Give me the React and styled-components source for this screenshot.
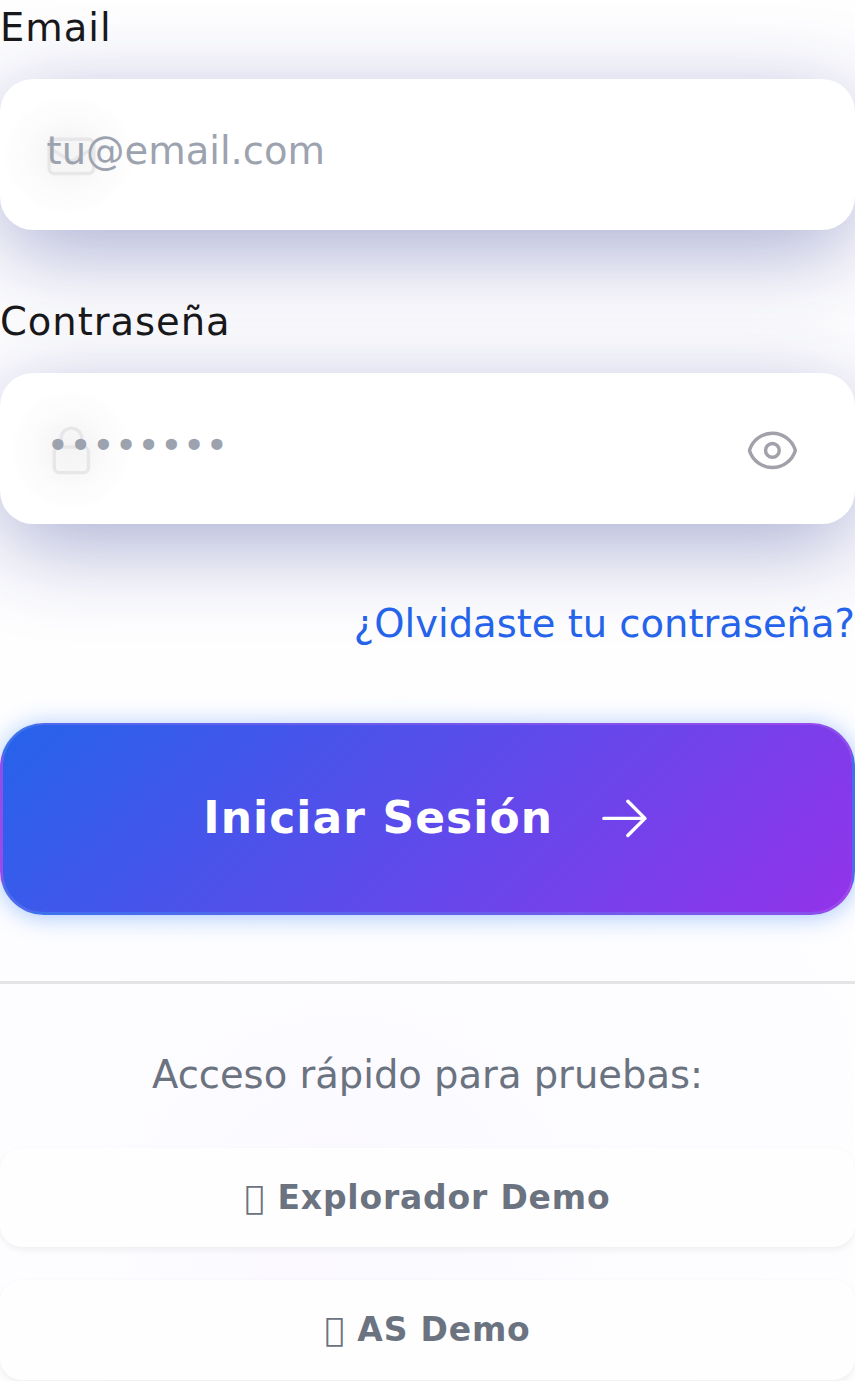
import React from "react";
import styled, { createGlobalStyle } from "styled-components";
import {
  HiOutlineArrowRight,
  HiOutlineEnvelope,
  HiOutlineEye,
  HiOutlineLockClosed,
} from "react-icons/hi2";

const GlobalStyle = createGlobalStyle`
  *, *::before, *::after { box-sizing: border-box; }
  html, body { margin: 0; padding: 0; }
  body { background: #fefeff; overflow: hidden; }
  button, input { font-family: inherit; }
`;

const Page = styled.main`
  width: 100%;
  height: 1381px;
  overflow: hidden;
  padding-top: 1.7px;
  font-family: "DejaVu Sans", sans-serif;
  font-size: 38.48px;
  line-height: 52px;
  color: #18181b;
  background:
    radial-gradient(circle at 340px 1230px, rgba(192, 85, 247, 0.014), rgba(192, 85, 247, 0.01) 180px, transparent 300px),
    radial-gradient(circle at 400px 1250px, rgba(59, 100, 246, 0.01), transparent 660px),
    #fefeff;
`;

const Form = styled.form`
  display: flex;
  flex-direction: column;
`;

const Field = styled.div`
  display: flex;
  flex-direction: column;
  gap: 25.4px;
  margin-bottom: ${(p) => p.$gap}px;
`;

const Label = styled.label`
  position: relative;
  z-index: 1;
  letter-spacing: 0.025em;
`;

const InputShell = styled.div`
  position: relative;
  height: 151.2px;
  border-radius: 33px;
  background: #fff;
  box-shadow: 0 22px 87.7px rgba(31, 38, 135, 0.37);
`;

const LeadingIcon = styled.span`
  position: absolute;
  top: 49.6px;
  left: 43.8px;
  display: flex;
  color: #e7e7e9;
  font-size: 54.8px;

  &::before {
    content: "";
    position: absolute;
    inset: ${(p) => p.$glow};
    border-radius: 50%;
    background: radial-gradient(
      closest-side,
      rgba(0, 0, 0, 0.044),
      rgba(0, 0, 0, 0.034) 30%,
      rgba(0, 0, 0, 0.016) 60%,
      rgba(0, 0, 0, 0.006) 88%,
      transparent
    );
  }

  svg { position: relative; }
`;

const Input = styled.input`
  position: relative;
  display: block;
  width: 100%;
  height: ${(p) => (p.type === "password" ? 144 : 142.6)}px;
  padding: 0 46.6px;
  border: 0;
  outline: 0;
  background: transparent;
  color: #18181b;
  font-size: 38.48px;

  &::placeholder { color: #9ca3af; opacity: 1; }
`;

const RevealButton = styled.button`
  position: absolute;
  top: 50.2px;
  right: 55px;
  display: flex;
  padding: 0;
  border: 0;
  background: none;
  color: #a1a1aa;
  font-size: 54.8px;
`;

const ForgotLink = styled.a`
  position: relative;
  align-self: flex-end;
  margin-bottom: 72.4px;
  color: #2563eb;
  white-space: nowrap;
  text-decoration: none;
`;

const SubmitButton = styled.button`
  display: flex;
  align-items: center;
  justify-content: center;
  gap: 43.8px;
  height: 192px;
  padding: 0 0 1px;
  border: 3px solid rgba(255, 255, 255, 0.1);
  border-top-width: 2px;
  border-radius: 44px;
  background-image: linear-gradient(135deg, #2563eb, #9333ea);
  box-shadow: 0 2px 24px rgba(59, 130, 246, 0.45);
  color: #fff;
  font-size: 43.95px;
  font-weight: 700;
  letter-spacing: 0.025em;

  svg { margin-top: 2px; font-size: 54.8px; }
`;

const QuickAccess = styled.section`
  display: flex;
  flex-direction: column;
  margin-top: 66.3px;
  padding-top: 65px;
  border-top: 3px solid #e4e4e7;
`;

const QuickTitle = styled.p`
  margin: 0 0 47px;
  color: #6b7280;
  text-align: center;
`;

const DemoButton = styled.button`
  height: 99.6px;
  margin-bottom: 32.6px;
  padding: 0;
  border: 0;
  border-radius: 22px;
  background: #fefefe;
  box-shadow: 0 3px 7px rgba(0, 0, 0, 0.06);
  color: #6b7280;
  font-size: 32.98px;
  font-weight: 700;
  letter-spacing: 0.025em;
`;

const demoAccounts = ["\u{F0000} Explorador Demo", "\u{F0000} AS Demo"];

export default function App() {
  return (
    <>
      <GlobalStyle />
      <Page>
        <Form onSubmit={(e) => e.preventDefault()}>
          <Field $gap={65.4}>
            <Label htmlFor="email">Email</Label>
            <InputShell>
              <LeadingIcon $glow="-34px -36px -32px -42px"><HiOutlineEnvelope /></LeadingIcon>
              <Input id="email" type="email" placeholder="tu@email.com" />
            </InputShell>
          </Field>
          <Field $gap={73.9}>
            <Label htmlFor="password">Contraseña</Label>
            <InputShell>
              <LeadingIcon $glow="-34px -32px -34px -34px"><HiOutlineLockClosed /></LeadingIcon>
              <Input id="password" type="password" placeholder="••••••••" />
              <RevealButton type="button" aria-label="Mostrar contraseña">
                <HiOutlineEye />
              </RevealButton>
            </InputShell>
          </Field>
          <ForgotLink href="#">¿Olvidaste tu contraseña?</ForgotLink>
          <SubmitButton type="submit">
            <span>Iniciar Sesión</span>
            <HiOutlineArrowRight />
          </SubmitButton>
        </Form>
        <QuickAccess>
          <QuickTitle>Acceso rápido para pruebas:</QuickTitle>
          {demoAccounts.map((name) => (
            <DemoButton key={name} type="button">{name}</DemoButton>
          ))}
        </QuickAccess>
      </Page>
    </>
  );
}
